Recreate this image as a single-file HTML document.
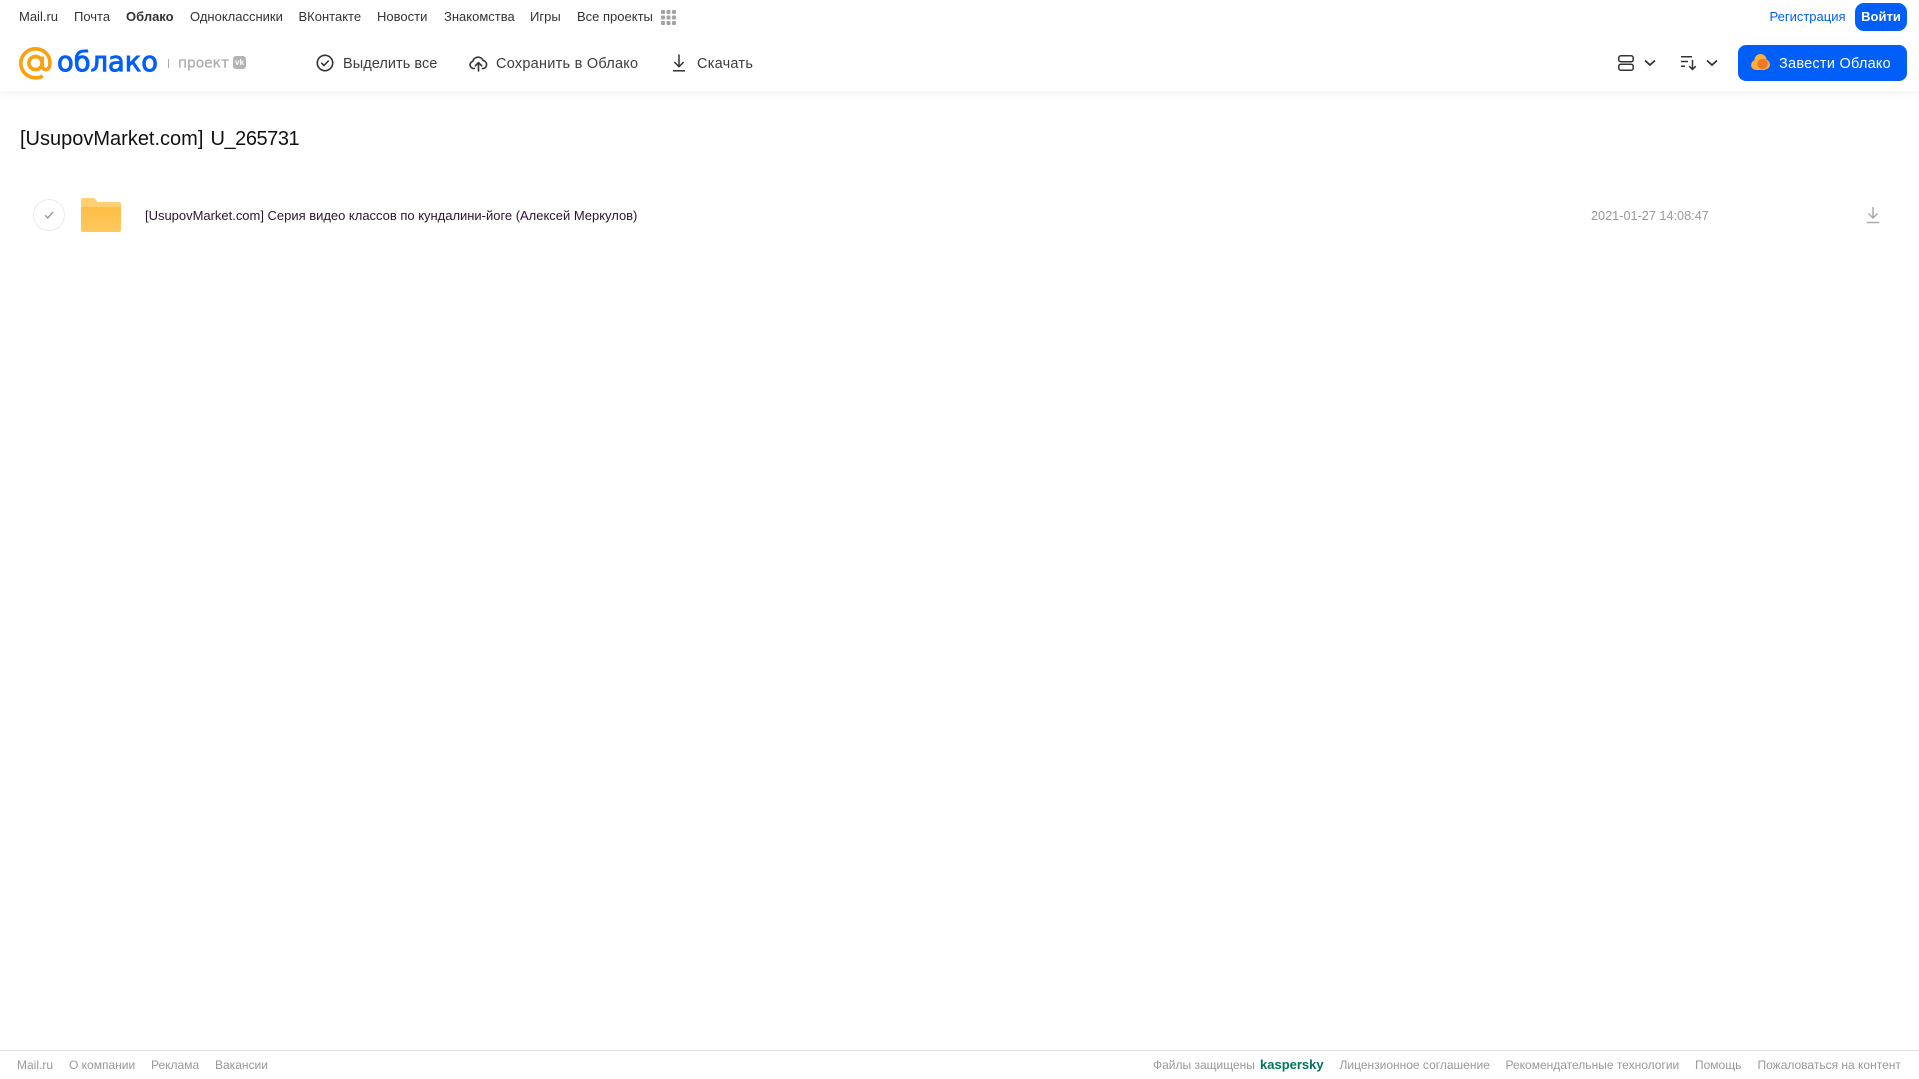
<!DOCTYPE html>
<html lang="ru"><head><meta charset="utf-8"><title>Облако</title>
<style>
html,body{margin:0;padding:0;background:#fff}
body{width:1919px;height:1079px;position:relative;overflow:hidden;font-family:"Liberation Sans",sans-serif}
.t{position:absolute;white-space:nowrap;line-height:20px;height:20px}
.n{top:7px;font-size:13px;color:#333}
.b{top:54px;font-size:14.5px;color:#3c3c3c;letter-spacing:.25px}
.f{top:1055px;font-size:12px;color:#999}
svg{position:absolute;overflow:visible}
</style></head><body>
<div style="position:absolute;left:0;top:0;width:1919px;height:91px;background:#fff;box-shadow:0 2px 10px rgba(0,0,0,.06)"></div>

<span class="t n" style="left:19px">Mail.ru</span>
<span class="t n" style="left:74px">Почта</span>
<span class="t n" style="left:126px;font-weight:700">Облако</span>
<span class="t n" style="left:190px">Одноклассники</span>
<span class="t n" style="left:298.500px">ВКонтакте</span>
<span class="t n" style="left:377px">Новости</span>
<span class="t n" style="left:444px">Знакомства</span>
<span class="t n" style="left:530px">Игры</span>
<span class="t n" style="left:577px">Все проекты</span>
<svg style="left:661px;top:10px" width="15" height="15" fill="#a3a3a3"><rect x="0" y="0" width="4" height="4" rx="1"/><rect x="5.5" y="0" width="4" height="4" rx="1"/><rect x="11" y="0" width="4" height="4" rx="1"/><rect x="0" y="5.5" width="4" height="4" rx="1"/><rect x="5.5" y="5.5" width="4" height="4" rx="1"/><rect x="11" y="5.5" width="4" height="4" rx="1"/><rect x="0" y="11" width="4" height="4" rx="1"/><rect x="5.5" y="11" width="4" height="4" rx="1"/><rect x="11" y="11" width="4" height="4" rx="1"/></svg>

<span class="t n" style="left:1769.500px;color:#005ff9">Регистрация</span>
<div style="position:absolute;left:1855px;top:3px;width:52px;height:28px;border-radius:9px;background:#005ff9;color:#fff;font-size:13px;font-weight:700;line-height:28px;text-align:center">Войти</div>

<svg style="left:19px;top:47px" width="33" height="33" viewBox="0 0 33 33" fill="none" stroke="#f9a10f" stroke-width="3.6"><circle cx="16.5" cy="16" r="6.6"/><path d="M23.2 9.5v8.3c0 3.4 1.6 4.9 3.6 4.9 2.500 0 4.200-2.700 4.200-6.700C31 7.800 24.500 1.800 16.500 1.800 8.400 1.800 1.800 8.300 1.800 16.300S8.400 30.800 16.500 30.800c2.700 0 5-.6 7.200-1.900"/></svg>
<svg style="left:0;top:0" width="260" height="90"><text x="57" y="71" font-family="DejaVu Sans" font-size="27.5" fill="#005ff9" stroke="#005ff9" stroke-width=".9" textLength="101" lengthAdjust="spacingAndGlyphs">облако</text>
<text x="178" y="67.500" font-family="DejaVu Sans" font-size="14" fill="#aeaeae" stroke="#aeaeae" stroke-width=".3" textLength="51" lengthAdjust="spacingAndGlyphs">проект</text></svg>
<div style="position:absolute;left:168px;top:59px;width:1px;height:9px;background:#aaa"></div>
<div style="position:absolute;left:233px;top:56px;width:13px;height:13px;border-radius:3px;background:#b3b3b3;color:#fff;font-size:8px;font-weight:700;line-height:13px;text-align:center">vk</div>

<svg style="left:316px;top:54px" width="18" height="18" viewBox="0 0 18 18" fill="none" stroke="#333" stroke-width="1.600"><circle cx="9" cy="9" r="7.700"/><path d="M5.700 9.200l2.300 2.300 4.300-4.500" stroke-linecap="round" stroke-linejoin="round"/></svg>
<span class="t b" style="left:343px;letter-spacing:.05px">Выделить все</span>

<svg style="left:469px;top:54px" width="19" height="18" viewBox="0 0 19 18" fill="none" stroke="#333" stroke-width="1.600" stroke-linecap="round" stroke-linejoin="round"><path d="M5.500 14.500H4.800A3.600 3.600 0 0 1 3.800 7.400 5.500 5.500 0 0 1 14.200 6.500 4.100 4.100 0 0 1 14.500 14.500H13.500"/><path d="M9.500 17V8.800M6.300 11.800l3.200-3.200 3.200 3.200"/></svg>
<span class="t b" style="left:496px">Сохранить в Облако</span>

<svg style="left:671px;top:54px" width="16" height="18" viewBox="0 0 16 18" fill="none" stroke="#333" stroke-width="1.500"><path d="M8 .5V12.500M3.300 8l4.700 4.700L12.700 8"/><path d="M2 16.800H14"/></svg>
<span class="t b" style="left:697px">Скачать</span>

<svg style="left:1618px;top:55px" width="16" height="16" viewBox="0 0 16 16" fill="none" stroke="#333" stroke-width="1.500"><rect x=".8" y=".8" width="14.400" height="6" rx="2"/><rect x=".8" y="9.200" width="14.400" height="6" rx="2"/></svg>
<svg style="left:1644px;top:59px" width="12" height="8" viewBox="0 0 12 8" fill="none" stroke="#333" stroke-width="1.800"><path d="M1 1.500l5 4.500 5-4.500"/></svg>
<svg style="left:1681px;top:55px" width="16" height="16" viewBox="0 0 16 16" fill="none" stroke="#333" stroke-width="1.500"><path d="M0 1.800H11M0 6.500H7M0 11.200H4M11.500 5V14.500M8.200 11.200l3.300 3.300 3.300-3.300"/></svg>
<svg style="left:1706px;top:59px" width="12" height="8" viewBox="0 0 12 8" fill="none" stroke="#333" stroke-width="1.800"><path d="M1 1.500l5 4.500 5-4.500"/></svg>

<div style="position:absolute;left:1738px;top:45px;width:169px;height:36px;border-radius:8px;background:#005ff9"></div>
<svg style="left:1751px;top:54px" width="19" height="18" viewBox="0 0 19 18"><g fill="#fbb03b"><circle cx="5" cy="11" r="5"/><circle cx="9.500" cy="6" r="6"/><circle cx="14" cy="10.500" r="5"/><rect x="5" y="10" width="9" height="6"/></g><circle cx="11.500" cy="10" r="5.200" fill="#f4762a"/></svg>
<span class="t" style="left:1779px;top:54px;font-size:14.500px;color:#fff;letter-spacing:.25px">Завести Облако</span>

<span class="t" style="left:20px;top:127px;font-size:20px;line-height:24px;height:24px;color:#111">[UsupovMarket.com]</span>
<span class="t" style="left:210.500px;top:127px;font-size:20px;line-height:24px;height:24px;color:#111;letter-spacing:-.45px">U_265731</span>

<div style="position:absolute;left:33px;top:199px;width:30px;height:30px;border:1px solid #ebebeb;border-radius:50%"></div>
<svg style="left:43px;top:210px" width="12" height="10" viewBox="0 0 12 10" fill="none" stroke="#999" stroke-width="1.400"><path d="M2 5.200l2.800 2.800L10 2"/></svg>
<svg style="left:81px;top:198px" width="40" height="34" viewBox="0 0 40 34"><defs><linearGradient id="g" x1="0" y1="0" x2="0" y2="1"><stop offset="0" stop-color="#ffbe45"/><stop offset="1" stop-color="#ffc95f"/></linearGradient></defs><path d="M2 0H11C13.500 0 14.500 1 15.500 2.500L16.500 4H38C39.200 4 40 4.800 40 6V10H0V2C0 .8.800 0 2 0Z" fill="#ffcf72"/><path d="M0 9H40V32C40 33.200 39.200 34 38 34H2C.8 34 0 33.200 0 32Z" fill="url(#g)"/></svg>
<span class="t" style="left:145px;top:206px;font-size:13px;color:#2a1530;letter-spacing:-.015px">[UsupovMarket.com] Серия видео классов по кундалини-йоге (Алексей Меркулов)</span>
<span class="t" style="left:1591px;top:206px;font-size:12.700px;color:#999">2021-01-27 14:08:47</span>
<svg style="left:1866px;top:206px" width="14" height="18" viewBox="0 0 14 18" fill="none" stroke="#aaa" stroke-width="1.500"><path d="M7 1V12M2.500 7.500L7 12l4.500-4.500M.800 16.500H13.200"/></svg>

<div style="position:absolute;left:0;top:1050px;width:1919px;height:1px;background:#dcdcdc"></div>
<span class="t f" style="left:17px">Mail.ru</span>
<span class="t f" style="left:69px">О компании</span>
<span class="t f" style="left:151px">Реклама</span>
<span class="t f" style="left:215px">Вакансии</span>
<span class="t f" style="left:1153px">Файлы защищены</span>
<span class="t f" style="left:1260px;color:#00735c;font-weight:700;font-size:13px">kaspersky</span>
<span class="t f" style="left:1339.500px">Лицензионное соглашение</span>
<span class="t f" style="left:1505.500px">Рекомендательные технологии</span>
<span class="t f" style="left:1695px">Помощь</span>
<span class="t f" style="left:1757.500px">Пожаловаться на контент</span>
</body></html>
